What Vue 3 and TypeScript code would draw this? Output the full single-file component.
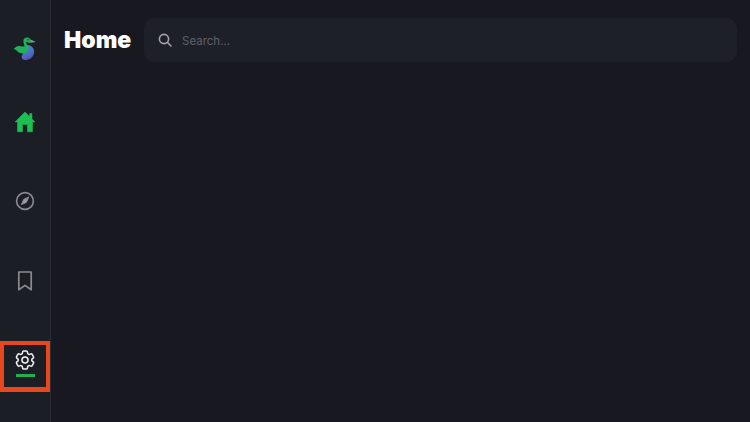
<script setup lang="ts">
const placeholder: string = 'Search...'
</script>

<template>
  <div class="app">
    <aside class="rail">
      <div class="slot logo-slot">
        <svg width="26" height="28" viewBox="0 0 26 28" fill="none">
          <defs>
            <linearGradient id="body" x1="0.3" y1="0" x2="0.7" y2="1">
              <stop offset="0" stop-color="#3f94a8" />
              <stop offset="0.5" stop-color="#4a72c8" />
              <stop offset="1" stop-color="#5a4cb0" />
            </linearGradient>
          </defs>
          <path d="M15 11C21 11.500 23 15.500 21.800 20C20.500 24.500 15.500 26.800 11.500 25.800C9.500 25 9.200 22.500 10.500 20.500C12 18 14.500 15 15 11Z" fill="url(#body)" />
          <path d="M11.500 8C11 5 13.200 3.300 15.600 3.600C17 3.800 18 4.600 18.500 5.600L23.500 8L18.800 8.600C17.400 9.200 16 8.800 15.200 7.900C14.300 7.200 14 8.200 14.500 9.400C15.200 11 16.600 12.500 16.400 15C16.200 17.800 13.500 20 10.500 19.600C7.200 19.100 5 17.800 4 15.800C3 15.800 2.200 15.300 1.800 14.300C3.200 14 3.800 12.800 5.200 12.300C7.500 11.600 10.200 13 12.600 12.500C12 11 11.700 9.500 11.500 8Z" fill="#22b15a" />
          <path d="M18.500 5.600L23.500 8L18.800 8.600C18.300 7.600 18.200 6.600 18.500 5.600Z" fill="#7f8f94" />
          <circle cx="16" cy="5.800" r="0.700" fill="#1c1e26" />
        </svg>
      </div>
      <div class="slot">
        <svg width="24" height="24" viewBox="0 0 24 24">
          <path fill-rule="evenodd" d="M12 3L2 13H4.500V22.800H9.600V15.400H14.400V22.800H19.500V13H22L19 10V4.600H16.600V7.600Z" fill="#1dbf50" stroke="#1dbf50" stroke-width="0.500" stroke-linejoin="round" />
        </svg>
      </div>
      <div class="slot">
        <svg width="24" height="24" viewBox="0 0 24 24" fill="none" stroke="#8a8b8e" stroke-width="1.600" stroke-linecap="round" stroke-linejoin="round">
          <circle cx="12" cy="12" r="8.400" />
          <path d="M15.600 8.400L13.400 13.400L8.400 15.600L10.600 10.600Z" fill="#9a9b9e" stroke-width="1" />
        </svg>
      </div>
      <div class="slot">
        <svg width="24" height="24" viewBox="0 0 24 24" fill="none" stroke="#8a8b8e" stroke-width="1.700" stroke-linejoin="round">
          <path d="M5.800 3H18.200V20.800L12 16.400L5.800 20.800Z" />
        </svg>
      </div>
      <div class="slot active">
        <svg width="24" height="24" viewBox="0 0 24 24" fill="none" stroke="#f4f4f4" stroke-width="1.500" stroke-linecap="round" stroke-linejoin="round">
          <path d="M9.594 3.940c.090-.542.560-.940 1.110-.940h2.593c.550 0 1.020.398 1.110.940l.213 1.281c.063.374.313.686.645.870.074.040.147.083.220.127.325.196.720.257 1.075.124l1.217-.456a1.125 1.125 0 0 1 1.370.490l1.296 2.247a1.125 1.125 0 0 1-.260 1.431l-1.003.827c-.293.241-.438.613-.430.992a7.723 7.723 0 0 1 0 .255c-.008.378.137.750.430.991l1.004.827c.424.350.534.955.260 1.430l-1.298 2.247a1.125 1.125 0 0 1-1.369.491l-1.217-.456c-.355-.133-.750-.072-1.076.124a6.470 6.470 0 0 1-.220.128c-.331.183-.581.495-.644.869l-.213 1.281c-.090.543-.560.940-1.110.940h-2.594c-.550 0-1.019-.398-1.110-.940l-.213-1.281c-.062-.374-.312-.686-.644-.870a6.520 6.520 0 0 1-.220-.127c-.325-.196-.720-.257-1.076-.124l-1.217.456a1.125 1.125 0 0 1-1.369-.490l-1.297-2.247a1.125 1.125 0 0 1 .260-1.431l1.004-.827c.292-.240.437-.613.430-.991a6.932 6.932 0 0 1 0-.255c.007-.380-.138-.751-.430-.992l-1.004-.827a1.125 1.125 0 0 1-.260-1.430l1.297-2.247a1.125 1.125 0 0 1 1.370-.491l1.216.456c.356.133.751.072 1.076-.124.072-.044.146-.086.220-.128.332-.183.582-.495.644-.869l.214-1.280Z" />
          <circle cx="12" cy="12" r="3" />
        </svg>
        <span class="underline"></span>
      </div>
    </aside>
    <main class="main">
      <header class="top">
        <h1 class="title">Home</h1>
        <div class="search">
          <svg width="16" height="16" viewBox="0 0 16 16" fill="none" stroke="#a3a4a8" stroke-width="1.600" stroke-linecap="round">
            <circle cx="7" cy="7" r="4.600" />
            <path d="M10.500 10.500L14 14" />
          </svg>
          <span class="placeholder">{{ placeholder }}</span>
        </div>
      </header>
    </main>
  </div>
</template>

<style>
html, body { background: #171820; }
</style>

<style scoped>
.app {
  display: flex;
  width: 750px;
  height: 422px;
  overflow: hidden;
  background: #171820;
  font-family: Inter, "Liberation Sans", sans-serif;
}
.rail {
  box-sizing: border-box;
  width: 51px;
  flex: none;
  display: flex;
  flex-direction: column;
  padding-top: 22px;
  gap: 28px;
  background: #1c1e26;
  border-right: 1px solid #2b2d34;
}
.slot {
  box-sizing: border-box;
  width: 50px;
  height: 52px;
  display: flex;
  flex-direction: column;
  align-items: center;
  justify-content: center;
}
.logo-slot {
  margin-bottom: -7px;
}
.active {
  height: 51px;
  margin-top: 6px;
  justify-content: flex-start;
  gap: 2px;
  border: 4px solid #e8481c;
  border-bottom-width: 5px;
  padding-top: 3px;
}
.underline {
  flex: none;
  width: 19px;
  height: 3px;
  background: #20b04f;
}
.main {
  flex: 1;
  min-width: 0;
  padding: 18px 13px 0 13px;
}
.top {
  display: flex;
  align-items: center;
  gap: 13px;
}
.title {
  width: 67px;
  flex: none;
  margin: 0;
  font-size: 23px;
  line-height: 44px;
  font-weight: 900;
  white-space: nowrap;
  color: #fff;
}
.search {
  flex: 1;
  height: 44px;
  display: flex;
  align-items: center;
  gap: 9px;
  padding-left: 13px;
  border-radius: 10px;
  background: #1e2028;
}
.placeholder {
  font-size: 11.500px;
  line-height: 16px;
  padding-top: 2px;
  color: #5e6066;
}
</style>
